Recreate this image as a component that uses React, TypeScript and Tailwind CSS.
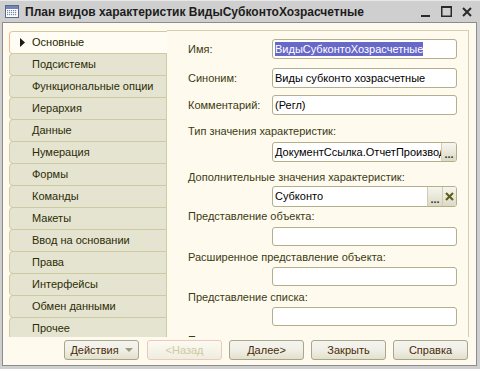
import React from 'react';

const tabs = [
  'Основные',
  'Подсистемы',
  'Функциональные опции',
  'Иерархия',
  'Данные',
  'Нумерация',
  'Формы',
  'Команды',
  'Макеты',
  'Ввод на основании',
  'Права',
  'Интерфейсы',
  'Обмен данными',
  'Прочее',
];

const WindowIcon = () => (
  <svg width="14" height="13" viewBox="0 0 14 13">
    <rect x="0.5" y="0.5" width="13" height="12" fill="#fff" stroke="#5a6a8a" />
    <rect x="1" y="1" width="12" height="3" fill="#6f86b8" />
    {[5, 7, 9].map((y) =>
      [2, 4, 6, 8, 10].map((x) => (
        <rect key={`${x}-${y}`} x={x} y={y} width="1.2" height="1.2" fill="#7b8aa8" />
      ))
    )}
  </svg>
);

const Field = ({
  value,
  selected,
  dots,
  clear,
  height = 'h-[20px]',
}: {
  value?: string;
  selected?: boolean;
  dots?: boolean;
  clear?: boolean;
  height?: string;
}) => (
  <div
    className={`${height} w-[185px] flex items-stretch bg-white border border-[#b3ae8c] rounded-[3px] overflow-hidden`}
  >
    <div className="flex-1 min-w-0 flex items-center pl-[2px] overflow-hidden whitespace-nowrap text-[11px] text-black">
      {selected ? (
        <span className="bg-[#6868c8] text-white leading-[14px]">{value}</span>
      ) : (
        value
      )}
    </div>
    {dots && (
      <div className="w-[15px] shrink-0 flex items-end justify-center pb-[3px] bg-gradient-to-b from-[#f6f6ee] to-[#dcdac4] border-l border-[#d0cdb4] text-[11px] font-bold leading-[8px] text-[#333]">
        ...
      </div>
    )}
    {clear && (
      <div className="w-[14px] shrink-0 flex items-center justify-center bg-gradient-to-b from-[#f6f6ee] to-[#dcdac4] border-l border-[#d0cdb4]">
        <svg width="9" height="9" viewBox="0 0 9 9">
          <path d="M1 1L8 8M8 1L1 8" stroke="#5e5a1e" strokeWidth="2" />
        </svg>
      </div>
    )}
  </div>
);

const Btn = ({ label, disabled, menu }: { label: string; disabled?: boolean; menu?: boolean }) => (
  <div
    className={`w-[75px] h-[20px] rounded-[3px] border flex items-center justify-center gap-[6px] text-[11px] ${
      disabled
        ? 'border-[#ecc9bc] text-[#cfcaa4] bg-gradient-to-b from-[#fdfaf2] to-[#efeddf]'
        : 'border-[#aaa68a] text-[#4a2a06] bg-gradient-to-b from-[#f4f4f0] via-[#f0efe6] to-[#e2e0cc]'
    }`}
  >
    <span>{label}</span>
    {menu && (
      <svg width="8" height="4" viewBox="0 0 8 4">
        <path d="M0 0H8L4 4Z" fill="#a09a80" />
      </svg>
    )}
  </div>
);

export default function App() {
  return (
    <div className="w-[480px] h-[369px] bg-[#cfcfcf] flex flex-col overflow-hidden font-['Liberation_Sans',Arial,sans-serif]">
      {/* Title bar */}
      <div className="h-[22px] flex items-center pl-[5px] pr-[8px] border-t border-[#e8e8e8]">
        <WindowIcon />
        <div className="ml-[6px] flex-1 text-[12px] font-bold text-[#1c1c1c] whitespace-nowrap">
          План видов характеристик ВидыСубконтоХозрасчетные
        </div>
        <div className="flex items-center gap-[10px]">
          <svg width="10" height="12" viewBox="0 0 10 12">
            <rect x="0" y="9" width="9" height="2" fill="#2a2a2a" />
          </svg>
          <svg width="11" height="11" viewBox="0 0 11 11">
            <rect x="0.75" y="0.75" width="9.5" height="9.5" fill="none" stroke="#2a2a2a" strokeWidth="1.5" />
            <rect x="0" y="0" width="11" height="2" fill="#2a2a2a" />
          </svg>
          <svg width="10" height="10" viewBox="0 0 10 10">
            <path d="M1 1L9 9M9 1L1 9" stroke="#2a2a2a" strokeWidth="2" />
          </svg>
        </div>
      </div>

      {/* Body */}
      <div className="flex-1 ml-[2px] mr-[3px] mb-[3px] border border-[#8c8c8c] bg-[#fefaee] flex flex-col pt-[7px] pl-[6px] pr-[7px] min-h-0">
        <div className="h-[307px] flex overflow-hidden">
          {/* Tabs */}
          <div className="w-[158px] flex flex-col pt-px">
            {tabs.map((t, i) => (
              <div
                key={t}
                className={`h-[23px] shrink-0 flex items-center rounded-l-[4px] border border-[#cfcba0] text-[11px] ${
                  i === 0
                    ? 'bg-[#fffcf3] border-r-0 border-l-[#f3b890] text-[#1e1e00]'
                    : '-mt-px bg-[#e5e4d1] text-[#2c2c06]'
                }`}
              >
                <div className="w-[22px] flex justify-center pl-[2px]">
                  {i === 0 && (
                    <svg width="5" height="9" viewBox="0 0 5 9">
                      <path d="M0 0L5 4.5L0 9Z" fill="#1a1a1a" />
                    </svg>
                  )}
                </div>
                <span className="whitespace-nowrap">{t}</span>
              </div>
            ))}
          </div>

          {/* Page */}
          <div className="flex-1 border-t border-r border-[#d3cfb0] pl-[21px] pt-[8px] flex flex-col text-[11px] text-[#3b3b12]">
            <div className="flex items-center">
              <div className="w-[84px]">Имя:</div>
              <Field value="ВидыСубконтоХозрасчетные" selected />
            </div>
            <div className="flex items-center mt-[9px]">
              <div className="w-[84px]">Синоним:</div>
              <Field value="Виды субконто хозрасчетные" />
            </div>
            <div className="flex items-center mt-[7px]">
              <div className="w-[84px]">Комментарий:</div>
              <Field value="(Регл)" />
            </div>

            <div className="h-[14px] leading-[14px] mt-[9px] whitespace-nowrap">Тип значения характеристик:</div>
            <div className="ml-[84px] mt-[4px]">
              <Field value="ДокументСсылка.ОтчетПроизводстваЗаСмену" dots />
            </div>

            <div className="h-[14px] leading-[14px] mt-[8px] whitespace-nowrap">Дополнительные значения характеристик:</div>
            <div className="ml-[84px] mt-[2px]">
              <Field value="Субконто" dots clear height="h-[21px]" />
            </div>

            <div className="h-[14px] leading-[14px] mt-[2px] whitespace-nowrap">Представление объекта:</div>
            <div className="ml-[84px] mt-[4px]">
              <Field height="h-[19px]" />
            </div>

            <div className="h-[14px] leading-[14px] mt-[4px] whitespace-nowrap">Расширенное представление объекта:</div>
            <div className="ml-[84px] mt-[3px]">
              <Field height="h-[19px]" />
            </div>

            <div className="h-[14px] leading-[14px] mt-[4px] whitespace-nowrap">Представление списка:</div>
            <div className="ml-[84px] mt-[3px]">
              <Field height="h-[19px]" />
            </div>

            <div className="h-[14px] leading-[14px] mt-[7px] whitespace-nowrap">Представление списка расширенное:</div>
          </div>
        </div>

        {/* Buttons */}
        <div className="mt-[3px] flex justify-end gap-[7px] pr-[1px]">
          <div className="mr-[1px]">
            <Btn label="Действия" menu />
          </div>
          <Btn label="<Назад" disabled />
          <Btn label="Далее>" />
          <Btn label="Закрыть" />
          <Btn label="Справка" />
        </div>
      </div>
    </div>
  );
}
